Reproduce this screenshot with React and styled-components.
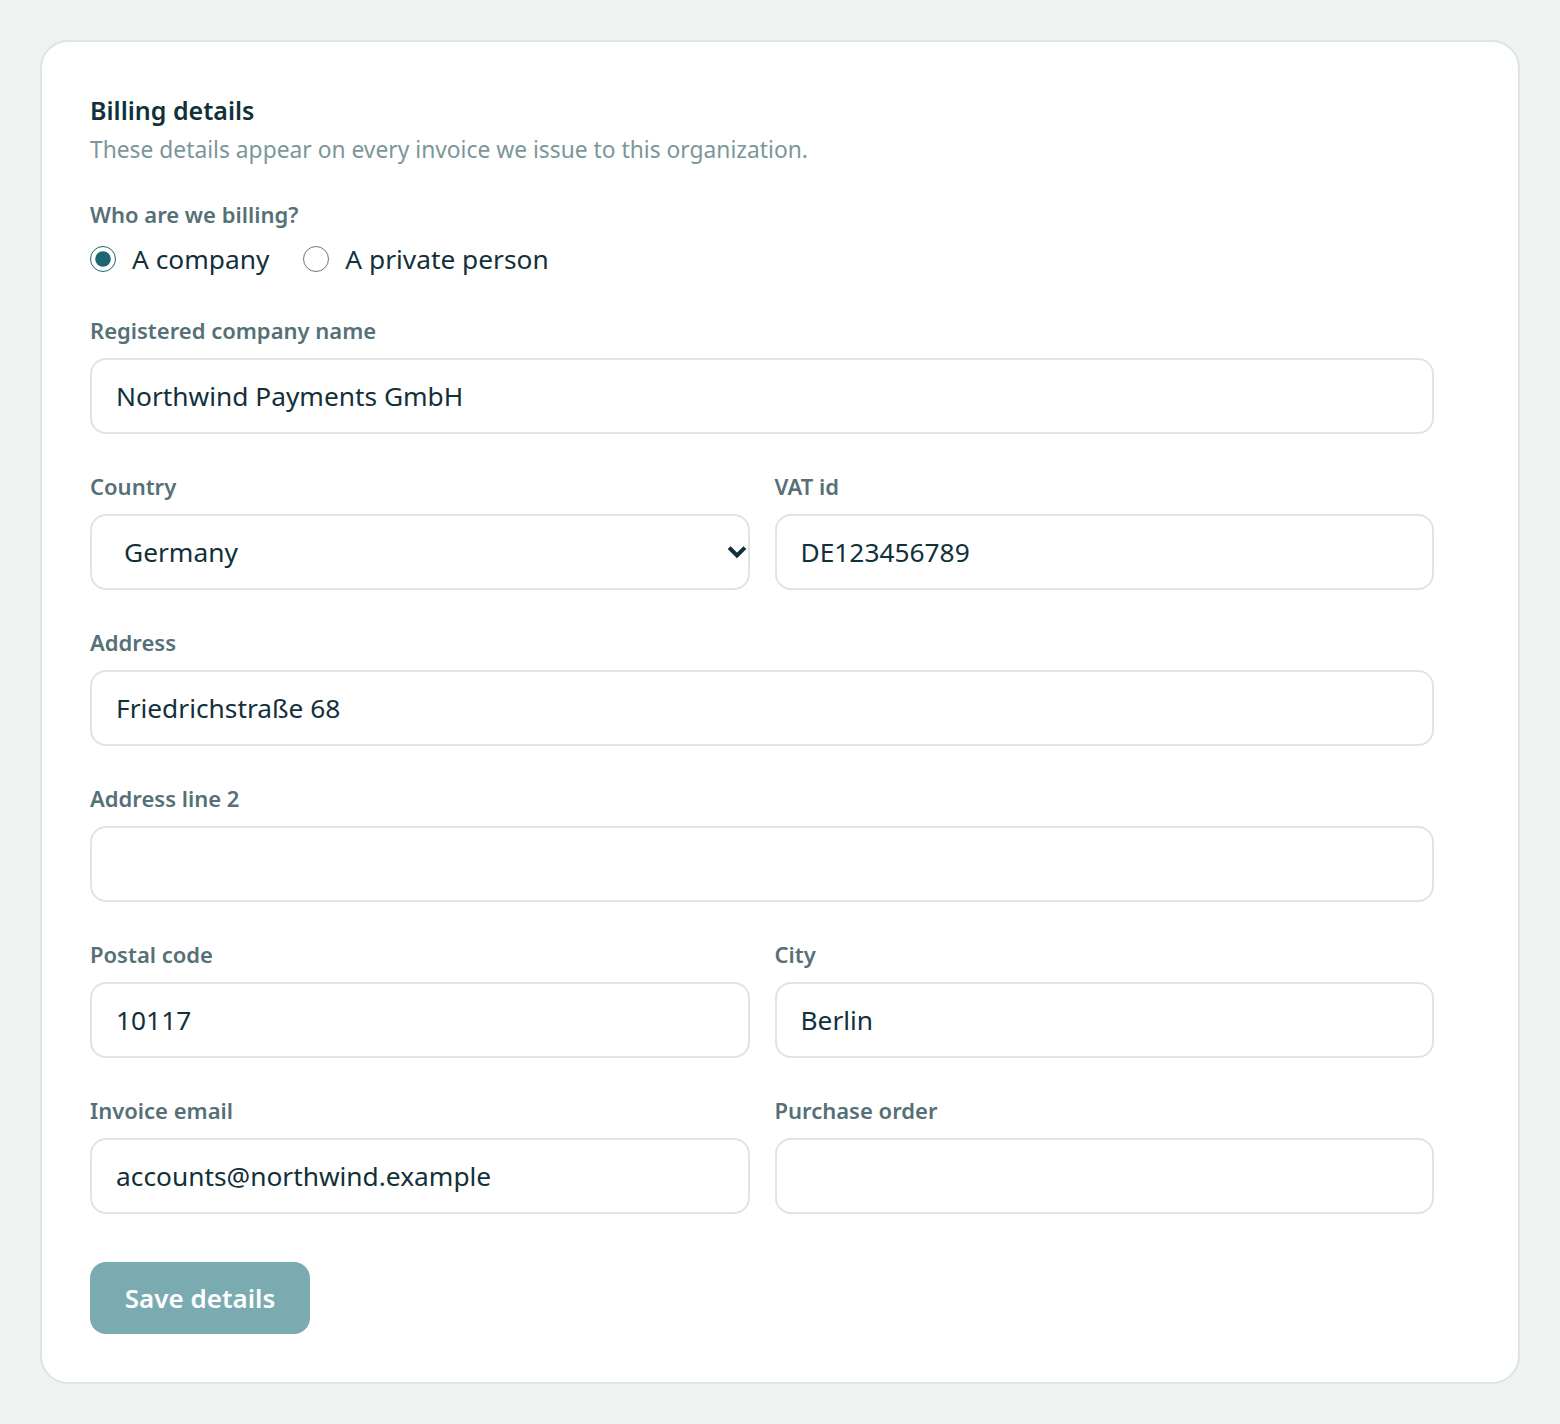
import React from 'react'
import styled, { createGlobalStyle } from 'styled-components'

const Global = createGlobalStyle`
body{
margin:0;
background:#eef2f1;
font-family:"Noto Sans","Open Sans",sans-serif;
}
`

const Page = styled.div`
padding:40px;
min-height:100vh;
box-sizing:border-box;
`
const Card = styled.div`
background:#fff;
border:2px solid #dde5e3;
border-radius:28px;
padding:48px;
`
const Form = styled.form`
max-width:1344px;
display:flex;
flex-direction:column;
`
const Title = styled.h2`
margin:0;
font-size:25px;
line-height:40px;
font-weight:600;
color:#10303a;
`
const Sub = styled.p`
margin:4px 0 0;
font-size:22.8px;
line-height:32px;
color:#7b969a;
`
const Label = styled.label`
display:block;
font-size:22px;
line-height:32px;
font-weight:600;
color:#557177;
margin-bottom:12px;
`
const Fieldset = styled.div`
margin-top:${p => p.$top || 36}px;
`
const RadioRow = styled.div`
display:flex;
align-items:center;
gap:34px;
height:42px;
margin-top:-4px;
`
const RadioOpt = styled.label`
display:flex;
align-items:center;
gap:16px;
font-size:26.3px;
color:#12303a;
cursor:pointer;
`
const Radio = styled.input`
margin:0;
width:26px;
height:26px;
accent-color:#1b6670;
`
const Input = styled.input`
width:100%;
box-sizing:border-box;
height:76px;
border:2px solid #dde5e3;
border-radius:16px;
padding:0 24px;
font-family:inherit;
font-size:26.3px;
color:#12303a;
background:#fff;
outline:none;
`
const SelectWrap = styled.div`
position:relative;
`
const Select = styled.select`
width:100%;
box-sizing:border-box;
height:76px;
border:2px solid #dde5e3;
border-radius:16px;
padding:0 24px 0 32px;
font-family:inherit;
font-size:26.3px;
color:#12303a;
background:#fff;
appearance:none;
outline:none;
`
const Chevron = styled.svg`
position:absolute;
right:-3px;
top:50%;
transform:translateY(-50%);
pointer-events:none;
`
const Grid = styled.div`
display:grid;
grid-template-columns:1fr 1fr;
column-gap:25px;
margin-top:36px;
`
const Button = styled.button`
margin-top:48px;
align-self:flex-start;
width:220px;
height:72px;
border:none;
border-radius:16px;
background:#7aabb1;
color:#fff;
font-family:inherit;
font-size:26px;
font-weight:600;
cursor:pointer;
`

const Field = ({ label, value, top }) => (
  <Fieldset $top={top}>
    <Label>{label}</Label>
    <Input defaultValue={value} />
  </Fieldset>
)

const App = () => {
  return (
    <Page>
      <Global />
      <Card>
        <Form onSubmit={e => e.preventDefault()}>
          <Title>Billing details</Title>
          <Sub>These details appear on every invoice we issue to this organization.</Sub>
          <Fieldset $top={32}>
            <Label>Who are we billing?</Label>
            <RadioRow>
              <RadioOpt><Radio type="radio" name="who" defaultChecked />A company</RadioOpt>
              <RadioOpt><Radio type="radio" name="who" />A private person</RadioOpt>
            </RadioRow>
          </Fieldset>
          <Field label="Registered company name" value="Northwind Payments GmbH" top={34} />
          <Grid>
            <div>
              <Label>Country</Label>
              <SelectWrap>
                <Select defaultValue="Germany">
                  <option>Germany</option>
                  <option>Austria</option>
                  <option>Switzerland</option>
                </Select>
                <Chevron width="32" height="32" viewBox="0 0 32 32">
                  <path d="M9.5 13 L16 19.5 L22.5 13" fill="none" stroke="#12303a" strokeWidth="4" strokeLinecap="square" />
                </Chevron>
              </SelectWrap>
            </div>
            <div>
              <Label>VAT id</Label>
              <Input defaultValue="DE123456789" />
            </div>
          </Grid>
          <Field label="Address" value="Friedrichstraße 68" />
          <Field label="Address line 2" value="" />
          <Grid>
            <div>
              <Label>Postal code</Label>
              <Input defaultValue="10117" />
            </div>
            <div>
              <Label>City</Label>
              <Input defaultValue="Berlin" />
            </div>
          </Grid>
          <Grid>
            <div>
              <Label>Invoice email</Label>
              <Input defaultValue="accounts@northwind.example" />
            </div>
            <div>
              <Label>Purchase order</Label>
              <Input defaultValue="" />
            </div>
          </Grid>
          <Button type="submit">Save details</Button>
        </Form>
      </Card>
    </Page>
  )
}

export default App
